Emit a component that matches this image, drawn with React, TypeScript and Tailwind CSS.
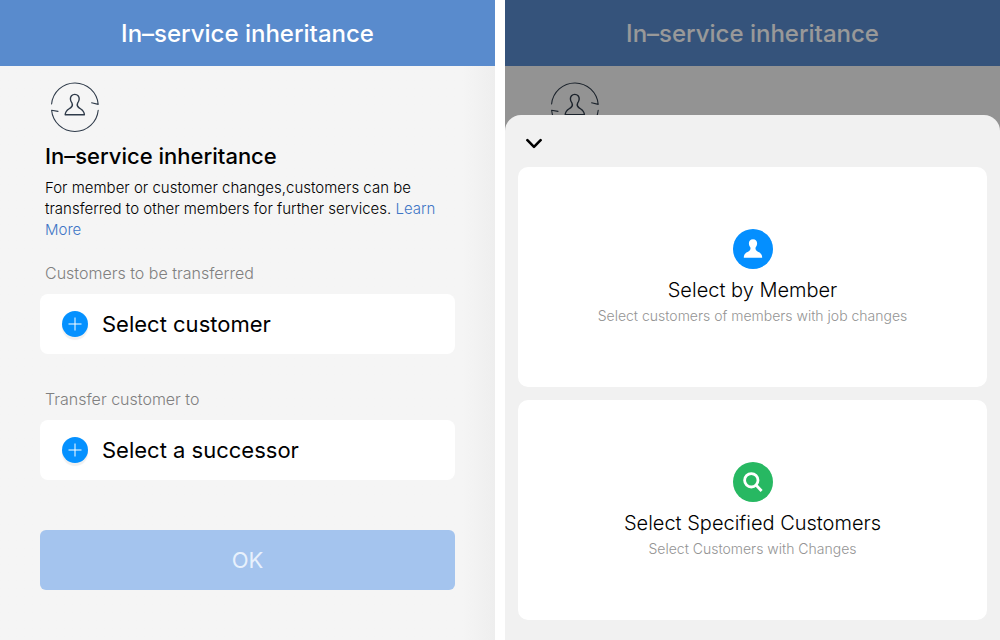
import clsx from "clsx";

function TransferIcon({ className }: { className?: string }) {
  return (
    <svg
      className={clsx("h-[50px] w-[50px]", className)}
      viewBox="0 0 50 50"
      fill="none"
      stroke="#2f3b4a"
      strokeWidth="1.1"
      strokeLinecap="round"
      strokeLinejoin="round"
      aria-hidden="true"
    >
      <path d="M1.6 22A23.4 23.4 0 0 1 48.2 22.4L41.6 20.8" />
      <path d="M8 29.4L1.6 28.2A23.4 23.4 0 0 0 48.2 28.2" />
      <path
        strokeWidth="1.4"
        d="M24.8 12.4C22 12.4 20.3 14.4 20.4 17C20.5 18.8 21.3 20.2 22 21.2C22.7 22.6 22.3 24.4 20.8 25.6C18.6 27.4 15.4 28 15.2 32.7H34.4C34.2 28 31 27.4 28.8 25.6C27.3 24.4 26.9 22.6 27.6 21.2C28.3 20.2 29.1 18.8 29.2 17C29.3 14.4 27.6 12.4 24.8 12.4Z"
      />
    </svg>
  );
}

function PageHeader() {
  return (
    <header className="flex h-[66px] items-center justify-center bg-[#598bcd] pt-0.5">
      <span className="text-2xl font-medium text-white">
        In–service inheritance
      </span>
    </header>
  );
}

function PickerField({ label, value }: { label: string; value: string }) {
  return (
    <div>
      <div className="mb-[9px] pl-[5px] text-base leading-6 font-light text-[#808080]">
        {label}
      </div>
      <button
        type="button"
        aria-label={value}
        className="flex h-[60px] w-full items-center gap-3.5 rounded-lg bg-white px-[22px] text-left"
      >
        <span className="flex h-[26px] w-[26px] shrink-0 items-center justify-center rounded-full bg-[#0591ff] shadow-[0_3px_1px_#f0f0f0]">
          <svg
            className="h-3.5 w-3.5"
            viewBox="0 0 14 14"
            stroke="#fff"
            strokeWidth="1"
            aria-hidden="true"
          >
            <path d="M7 0.5V13.5M0.5 7H13.5" />
          </svg>
        </span>
        <span className="text-[22px] leading-8 text-black">{value}</span>
      </button>
    </div>
  );
}

function OptionCard({
  title,
  hint,
  color,
  children,
}: {
  title: string;
  hint: string;
  color: string;
  children: React.ReactNode;
}) {
  return (
    <button
      type="button"
      className="flex h-[220px] w-full flex-col items-center justify-center rounded-[10px] bg-white pt-0.5"
    >
      <span
        className={clsx(
          "mb-1.5 flex h-10 w-10 items-center justify-center rounded-full",
          color
        )}
      >
        {children}
      </span>
      <span className="text-xl leading-[30px] font-light text-black">
        {title}
      </span>
      <span className="text-sm leading-[22px] font-light text-[#949494]">
        {hint}
      </span>
    </button>
  );
}

function InheritancePage() {
  return (
    <section className="min-h-screen bg-linear-to-l from-[#eeeeee] to-[#f5f5f5] to-[32px]">
      <PageHeader />
      <main className="px-10 pt-4 pb-12">
        <div className="px-[5px]">
          <TransferIcon className="ml-[5px]" />
          <h1 className="mt-2 text-[22px] leading-8 font-medium text-black">
            In–service inheritance
          </h1>
          <p className="mt-[5px] text-[15px] leading-[21px] font-light text-black">
            For member or customer changes,customers can be transferred to other
            members for further services.{" "}
            <a href="#" className="text-[#3f76c6]">
              Learn More
            </a>
          </p>
        </div>
        <div className="mt-[21px] flex flex-col gap-[33px]">
          <PickerField
            label="Customers to be transferred"
            value="Select customer"
          />
          <PickerField label="Transfer customer to" value="Select a successor" />
        </div>
        <button
          type="button"
          className="mt-[50px] h-[60px] w-full rounded-md bg-[#a4c4ee] text-[22px] text-[#e8f1fc]"
        >
          OK
        </button>
      </main>
    </section>
  );
}

function SelectSheet() {
  return (
    <section className="relative min-h-screen overflow-hidden bg-[#f5f5f5]">
      <PageHeader />
      <TransferIcon className="mt-4 ml-[45px]" />
      <div className="absolute inset-0 bg-black/40" />
      <div className="absolute inset-x-0 top-[115px] bottom-0 rounded-t-2xl bg-[#f1f1f1] px-[13px]">
        <button
          type="button"
          aria-label="Close"
          className="flex h-[52px] items-center px-2 pt-1.5"
        >
          <svg
            className="h-3 w-4"
            viewBox="0 0 16 12"
            fill="none"
            stroke="#000"
            strokeWidth="2.6"
            strokeLinecap="round"
            strokeLinejoin="round"
            aria-hidden="true"
          >
            <path d="M1.4 2.2L8 8.8L14.6 2.2" />
          </svg>
        </button>
        <div className="flex flex-col gap-[13px]">
          <OptionCard
            title="Select by Member"
            hint="Select customers of members with job changes"
            color="bg-[#048fff]"
          >
            <svg
              className="h-5 w-5"
              viewBox="0 0 20 20"
              fill="#fff"
              aria-hidden="true"
            >
              <path d="M10 0.2C7.2 0.2 5.8 2 5.9 4.5C6 6.2 6.6 7.4 7.3 8.3C7.8 9.8 7.5 11 6.2 12C3.8 13.6 0.9 14 0.8 18.8H19.2C19.1 14 16.2 13.6 13.8 12C12.5 11 12.2 9.8 12.7 8.3C13.4 7.4 14 6.2 14.1 4.5C14.2 2 12.8 0.2 10 0.2Z" />
            </svg>
          </OptionCard>
          <OptionCard
            title="Select Specified Customers"
            hint="Select Customers with Changes"
            color="bg-[#27b862]"
          >
            <svg
              className="h-5 w-5"
              viewBox="0 0 20 20"
              fill="none"
              stroke="#fff"
              strokeWidth="2.8"
              aria-hidden="true"
            >
              <circle cx="8.3" cy="8.3" r="6.7" />
              <path d="M13 13L18.6 19" />
            </svg>
          </OptionCard>
        </div>
      </div>
    </section>
  );
}

export default function App() {
  return (
    <div className="grid min-h-screen grid-cols-2 gap-2.5 bg-white font-['Inter',sans-serif]">
      <InheritancePage />
      <SelectSheet />
    </div>
  );
}
